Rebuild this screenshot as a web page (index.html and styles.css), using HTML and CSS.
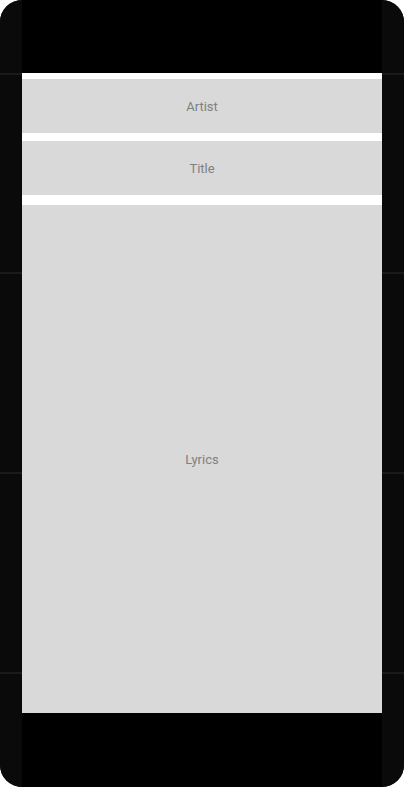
FILE: index.html
```html
<!DOCTYPE html>
<html>
<head>
<meta charset="utf-8">
<link rel="stylesheet" href="styles.css">
</head>
<body>
<div class="device">
  <div class="side"></div>
  <div class="screen">
    <div class="topbar"></div>
    <div class="form">
      <div class="field field-artist">Artist</div>
      <div class="field field-title">Title</div>
      <div class="field field-lyrics">Lyrics</div>
    </div>
    <div class="bottombar"></div>
  </div>
  <div class="side"></div>
</div>
</body>
</html>
```
FILE: styles.css
```css
html, body {
  margin: 0;
  padding: 0;
  background: #ffffff;
}
.device {
  width: 404px;
  height: 787px;
  border-radius: 22px;
  overflow: hidden;
  background: #0a0a0a;
  display: grid;
  grid-template-columns: 22px 360px 22px;
}
.side {
  background-color: #0a0a0a;
  background-image:
    linear-gradient(#1a1a1a, #1a1a1a),
    linear-gradient(#1a1a1a, #1a1a1a),
    linear-gradient(#1a1a1a, #1a1a1a),
    linear-gradient(#1a1a1a, #1a1a1a);
  background-repeat: no-repeat;
  background-size: 100% 2px;
  background-position: 0 73px, 0 272px, 0 472px, 0 672px;
}
.screen {
  display: flex;
  flex-direction: column;
  background: #000000;
}
.topbar {
  height: 73px;
  background: #000000;
}
.form {
  height: 640px;
  background: #ffffff;
  display: flex;
  flex-direction: column;
  padding-top: 6px;
  box-sizing: border-box;
}
.field {
  background: #d9d9d9;
  color: #808080;
  font-family: Roboto, "Liberation Sans", sans-serif;
  font-size: 13px;
  display: flex;
  align-items: center;
  justify-content: center;
}
.field-artist {
  height: 54px;
}
.field-title {
  height: 54px;
  margin-top: 8px;
}
.field-lyrics {
  flex: 1;
  margin-top: 10px;
}
.bottombar {
  flex: 1;
  background: #000000;
}
```
